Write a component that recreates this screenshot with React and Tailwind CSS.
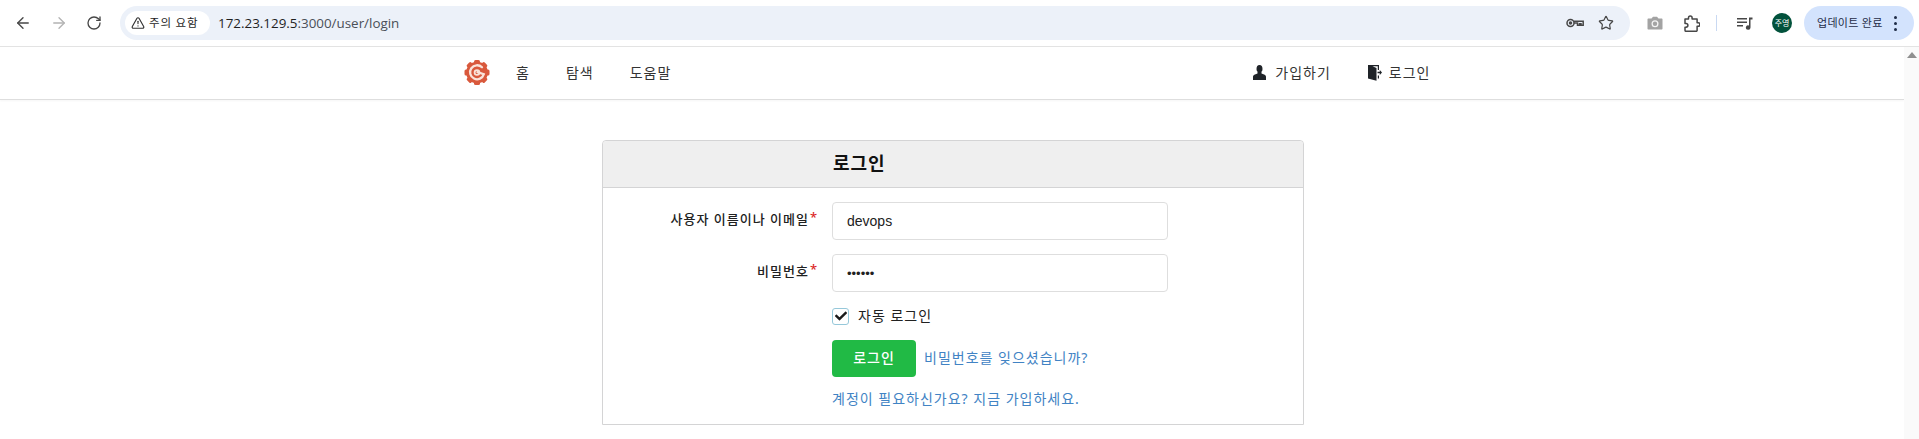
import React from "react";
import { ArrowLeft, ArrowRight, RotateCw, TriangleAlert, Star } from "lucide-react";
import { FaCheck } from "react-icons/fa";

const KR = "font-['Noto_Sans','Noto_Sans_CJK_KR',sans-serif]";

const gearAngles = [0, 45, 90, 135, 180, 225, 270, 315];

function GogsLogo() {
  return (
    <svg width="26" height="27" viewBox="0 0 26 27">
      <circle cx="13" cy="13.500" r="10.800" fill="#d9593c" />
      {gearAngles.map((a) => (
        <rect key={a} x="10" y="1" width="6" height="5" rx="1.500" fill="#d9593c" transform={`rotate(${a} 13 13.500)`} />
      ))}
      <path
        d="M18 8.300A7 7 0 1 0 19.800 15.200L13.500 13.200"
        fill="none"
        stroke="#fae3d9"
        strokeWidth="2.300"
        strokeLinecap="round"
      />
      <circle cx="13" cy="13.500" r="2.400" fill="none" stroke="#fae3d9" strokeWidth="1.800" />
    </svg>
  );
}

function PersonIcon() {
  return (
    <svg width="13" height="15" viewBox="0 0 13 15" fill="#1f2328">
      <ellipse cx="6.500" cy="3.800" rx="3" ry="3.800" />
      <path d="M4.500 7h4v1.500l3.200 1.300c.9.400 1.300 1.300 1.300 2.200V15H0v-3c0-.9.400-1.800 1.300-2.200l3.200-1.300z" />
    </svg>
  );
}

function DoorIcon() {
  return (
    <svg width="14" height="17" viewBox="0 0 14 17" fill="#1f2328">
      <path d="M0 1h11v5H9.800V2.200H4.500L8.500 4v12.800L0 14.500z" />
      <path d="M9.800 11.500H11V14.500H9.800z" />
      <path d="M9.500 7.800h2.300V6l2.200 2.500-2.200 2.500V9.300H9.500z" />
    </svg>
  );
}

function KeyIcon() {
  return (
    <svg width="18" height="10" viewBox="0 0 18 10" fill="none" stroke="#474747" strokeWidth="1.500">
      <circle cx="4.500" cy="5" r="3.500" />
      <circle cx="4.500" cy="5" r="1" fill="#474747" />
      <path d="M8 3.300h9.200v4h-2.200v-1.500h-1.500v1.500h-2v-2.300H8" />
    </svg>
  );
}

function CameraIcon() {
  return (
    <svg width="16" height="14" viewBox="0 0 16 14" fill="#a3a3a3">
      <path d="M1.500 2.500h3L6 .700h4l1.500 1.800h3c.600 0 1 .400 1 1v9c0 .600-.400 1-1 1h-13c-.600 0-1-.400-1-1v-9c0-.600.400-1 1-1z" />
      <circle cx="8" cy="7.800" r="3.500" fill="#f4f4f4" />
      <circle cx="8" cy="7.800" r="2.200" fill="#a3a3a3" />
    </svg>
  );
}

function PuzzleIcon() {
  return (
    <svg width="16" height="17" viewBox="0 0 16 17" fill="none" stroke="#474747" strokeWidth="1.500" strokeLinejoin="round">
      <path d="M1 4h3.500V2.800a1.800 1.800 0 0 1 3.600 0V4h5v3.700h1a1.800 1.800 0 0 1 0 3.600h-1V15.500a.8.8 0 0 1-.8.800H2a1 1 0 0 1-1-1v-3.100h1a1.900 1.900 0 0 0 0-3.800H1z" />
    </svg>
  );
}

function MediaIcon() {
  return (
    <svg width="16" height="13" viewBox="0 0 16 13" fill="#474747">
      <path d="M0 1h10v1.500H0zM0 4.500h10V6H0zM0 8h6v1.500H0z" />
      <path d="M12 .500h3.500V2.500h-2V10.500a2.300 2.300 0 1 1-1.500-2.100z" />
    </svg>
  );
}

function Toolbar() {
  return (
    <div className="h-[47px] shrink-0 bg-white border-b border-[#e3e3e3] flex items-center text-[#474747]">
      <ArrowLeft className="ml-[14px] w-[18px] h-[18px]" strokeWidth={1.800} />
      <ArrowRight className="ml-[18px] w-[18px] h-[18px] text-[#b3b3b3]" strokeWidth={1.800} />
      <RotateCw className="ml-[18px] w-[16px] h-[16px]" strokeWidth={2} />
      <div className="ml-[18px] w-[1510px] h-[34px] rounded-full bg-[#ecf1f9] flex items-center pl-[5px]">
        <div className="w-[85px] h-[24px] rounded-full bg-white flex items-center pl-[6px] gap-[4px] shrink-0">
          <TriangleAlert className="w-[14px] h-[14px] text-[#333]" strokeWidth={2} />
          <span className={`text-[11.500px] tracking-[0.8px] text-[#1f1f1f] whitespace-nowrap ${KR}`}>주의 요함</span>
        </div>
        <span className={`ml-[8px] text-[13.400px] text-[#1f1f1f] font-['Open_Sans',sans-serif]`}>
          172.23.129.5<span className="text-[#4a4f57]">:3000/user/login</span>
        </span>
        <div className="ml-auto flex items-center gap-[14px] pr-[16px]">
          <KeyIcon />
          <Star className="w-[16px] h-[16px]" strokeWidth={1.800} />
        </div>
      </div>
      <div className="ml-[17px]">
        <CameraIcon />
      </div>
      <div className="ml-[21px]">
        <PuzzleIcon />
      </div>
      <div className="ml-[16px] w-px h-[16px] bg-[#c9d9f2]" />
      <div className="ml-[20px]">
        <MediaIcon />
      </div>
      <div className={`ml-[19px] w-[20px] h-[20px] rounded-full bg-[#02523c] text-white text-[8px] flex items-center justify-center ${KR}`}>
        주영
      </div>
      <div className="ml-[12px] w-[110px] h-[34px] rounded-full bg-[#d3e3fd] flex items-center pl-[13px] gap-[11px]">
        <span className={`text-[11px] tracking-[0.3px] text-[#1f2c47] whitespace-nowrap ${KR}`}>업데이트 완료</span>
        <div className="flex flex-col gap-[3px]">
          <span className="w-[3px] h-[3px] rounded-full bg-[#1f2c47]" />
          <span className="w-[3px] h-[3px] rounded-full bg-[#1f2c47]" />
          <span className="w-[3px] h-[3px] rounded-full bg-[#1f2c47]" />
        </div>
      </div>
    </div>
  );
}

function Nav() {
  return (
    <div className={`h-[53px] pb-[2px] bg-white border-b border-[#dedede] shadow-[0_1px_2px_rgba(0,0,0,0.04)] flex items-center text-[14px] tracking-[1px] text-[#333] ${KR}`}>
      <div className="ml-[464px]">
        <GogsLogo />
      </div>
      <span className="ml-[26px]">홈</span>
      <span className="ml-[36px]">탐색</span>
      <span className="ml-[36px]">도움말</span>
      <div className="ml-[582px] flex items-center gap-[9px]">
        <PersonIcon />
        <span>가입하기</span>
      </div>
      <div className="ml-[37px] flex items-center gap-[7px]">
        <DoorIcon />
        <span>로그인</span>
      </div>
    </div>
  );
}

function LoginCard() {
  return (
    <div className={`mt-[40px] ml-[602px] w-[702px] h-[285px] border border-[#d4d4d5] rounded-t-[4px] text-[13px] text-[#212121] ${KR}`}>
      <div className="h-[47px] pb-[2px] bg-[#efefef] border-b border-[#d4d4d5] rounded-t-[4px] flex items-center pl-[230px]">
        <h1 className="text-[18px] tracking-[1px] font-bold text-[#111]">로그인</h1>
      </div>
      <div className="pt-[14px] pl-[229px]">
        <div className="flex items-center h-[38px] relative">
          <label className="absolute right-full mr-[14px] whitespace-nowrap font-medium text-[13px] tracking-[1px] pb-[3px]">
            사용자 이름이나 이메일<span className="text-[#db2828] ml-[1px] relative -top-[2px]">*</span>
          </label>
          <input
            readOnly
            value="devops"
            className="w-[336px] h-[38px] border border-[#dedede] rounded-[4px] px-[14px] text-[14px] font-['Liberation_Sans',sans-serif] text-[#212121] outline-none"
          />
        </div>
        <div className="flex items-center h-[38px] mt-[14px] relative">
          <label className="absolute right-full mr-[14px] whitespace-nowrap font-medium text-[13px] tracking-[1px] pb-[3px]">
            비밀번호<span className="text-[#db2828] ml-[1px] relative -top-[2px]">*</span>
          </label>
          <input
            readOnly
            type="password"
            value="123456"
            className="w-[336px] h-[38px] border border-[#dedede] rounded-[4px] px-[14px] text-[13px] font-['Liberation_Sans',sans-serif] text-[#212121] outline-none"
          />
        </div>
        <div className="flex items-center mt-[14px] h-[20px] gap-[9px]">
          <div className="w-[17px] h-[17px] border border-[#96c8da] rounded-[3px] flex items-center justify-center">
            <FaCheck className="w-[12px] h-[12px] text-[#1a1a1a]" />
          </div>
          <span className="text-[14px] tracking-[1px] -mt-[2px]">자동 로그인</span>
        </div>
        <div className="flex items-center mt-[14px] gap-[8px]">
          <button className="w-[84px] h-[37px] pb-[2px] bg-[#21ba45] rounded-[4px] text-white text-[14px] tracking-[1px] font-medium">로그인</button>
          <a className="text-[14px] tracking-[1px] text-[#4183c4] -mt-[2px]">비밀번호를 잊으셨습니까?</a>
        </div>
        <a className="block mt-[11px] text-[14px] tracking-[1px] text-[#4183c4]">계정이 필요하신가요? 지금 가입하세요.</a>
      </div>
    </div>
  );
}

export default function App() {
  return (
    <div className="h-[439px] w-[1919px] overflow-hidden bg-white flex flex-col">
      <Toolbar />
      <div className="flex flex-1 min-h-0">
        <div className="flex-1 min-w-0">
          <Nav />
          <LoginCard />
        </div>
        <div className="w-[15px] bg-[#fafafa] flex justify-center pt-[5px]">
          <div className="w-0 h-0 border-l-[5px] border-r-[5px] border-b-[6px] border-l-transparent border-r-transparent border-b-[#8f8f8f]" />
        </div>
      </div>
    </div>
  );
}
